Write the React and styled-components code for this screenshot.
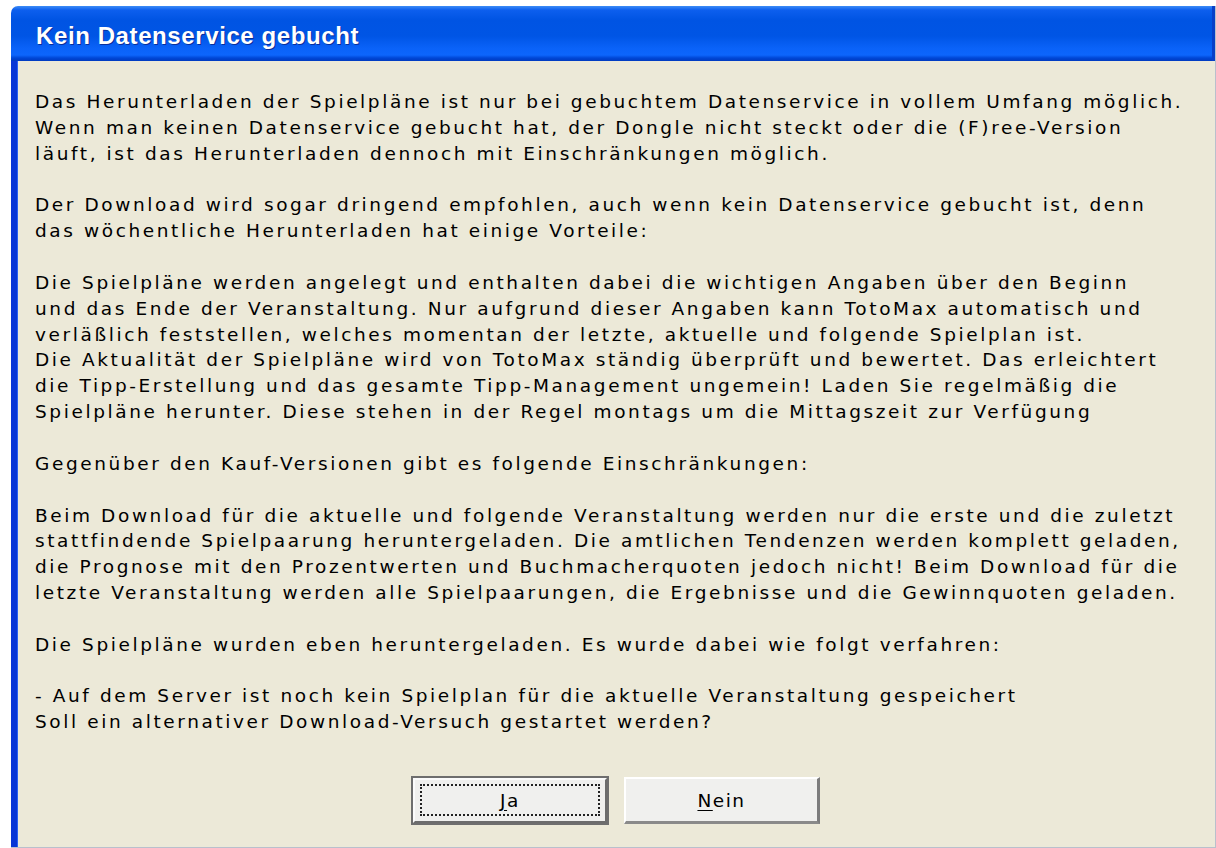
import React from "react";
import styled, { createGlobalStyle } from "styled-components";

const GlobalStyle = createGlobalStyle`
	html, body {
		margin: 0;
		padding: 0;
		background: #fff;
	}
	body {
		font-family: "DejaVu Sans", Verdana, sans-serif;
		overflow: hidden;
	}
`

const Window = styled.div`
	margin: 6px 0 0 11px;
	height: 842px;
	display: flex;
	flex-direction: column;
	box-sizing: border-box;
	border-right: 1px solid #b9c0cc;
	border-bottom: 1px solid #b9c0cc;
`

const TitleBar = styled.div`
	height: 55px;
	flex: none;
	display: flex;
	align-items: center;
	padding-left: 25px;
	border-radius: 7px 0 0 0;
	background: linear-gradient(
		to bottom,
		#3d8cf6 0px,
		#0d5fee 4px,
		#0054e3 14px,
		#0055e5 30px,
		#0a62f8 42px,
		#0d66fc 49px,
		#0047d6 52px,
		#003ac0 55px
	);
	box-shadow: inset -3px 0 0 #0840c8;
`

const Title = styled.span`
	color: #fff;
	font-family: "Liberation Sans", Arial, sans-serif;
	font-weight: bold;
	font-size: 24px;
	letter-spacing: 0.6px;
	margin-top: 4px;
	text-shadow: 1px 1px 0 #0a2f9c;
`

const Body = styled.div`
	flex: 1;
	display: flex;
	flex-direction: column;
	background: #ece9d8;
	border-left: 6px solid #0836d6;
	box-shadow: inset 1px 0 0 #2a62f0;
`

const Message = styled.div`
	padding: 28px 0 0 18px;
	color: #000;
	font-size: 18.5px;
	line-height: 25.85px;
	letter-spacing: 2.6px;
`

const Line = styled.div`
	white-space: pre;
	height: 25.85px;
`

const Buttons = styled.div`
	display: flex;
	justify-content: center;
	gap: 16px;
	margin-top: 42px;
`

const Button = styled.button`
	width: 196px;
	height: 47px;
	box-sizing: border-box;
	position: relative;
	background: #f0f0ee;
	font-family: "DejaVu Sans", Verdana, sans-serif;
	font-size: 18.5px;
	letter-spacing: 1.5px;
	color: #000;
	padding: 0;
	border-style: solid;
	border-width: ${p => (p.$default ? "3px" : "2px 3px 3px 2px")};
	border-color: ${p =>
		p.$default
			? "#fbfbfb #6c6c6c #6c6c6c #fbfbfb"
			: "#ffffff #7c7c7c #8a8a8a #ffffff"};
	outline: ${p => (p.$default ? "2px solid #6e6e6e" : "none")};
	outline-offset: -1px;
	u {
		text-decoration: underline;
		text-underline-offset: 3px;
	}
`

const FocusRect = styled.span`
	position: absolute;
	inset: 4px 5px 5px 5px;
	border: 2px dotted #222;
	pointer-events: none;
`

const lines = [
	"Das Herunterladen der Spielpläne ist nur bei gebuchtem Datenservice in vollem Umfang möglich.",
	"Wenn man keinen Datenservice gebucht hat, der Dongle nicht steckt oder die (F)ree-Version",
	"läuft, ist das Herunterladen dennoch mit Einschränkungen möglich.",
	"",
	"Der Download wird sogar dringend empfohlen, auch wenn kein Datenservice gebucht ist, denn",
	"das wöchentliche Herunterladen hat einige Vorteile:",
	"",
	"Die Spielpläne werden angelegt und enthalten dabei die wichtigen Angaben über den Beginn",
	"und das Ende der Veranstaltung. Nur aufgrund dieser Angaben kann TotoMax automatisch und",
	"verläßlich feststellen, welches momentan der letzte, aktuelle und folgende Spielplan ist.",
	"Die Aktualität der Spielpläne wird von TotoMax ständig überprüft und bewertet. Das erleichtert",
	"die Tipp-Erstellung und das gesamte Tipp-Management ungemein! Laden Sie regelmäßig die",
	"Spielpläne herunter. Diese stehen in der Regel montags um die Mittagszeit zur Verfügung",
	"",
	"Gegenüber den Kauf-Versionen gibt es folgende Einschränkungen:",
	"",
	"Beim Download für die aktuelle und folgende Veranstaltung werden nur die erste und die zuletzt",
	"stattfindende Spielpaarung heruntergeladen. Die amtlichen Tendenzen werden komplett geladen,",
	"die Prognose mit den Prozentwerten und Buchmacherquoten jedoch nicht! Beim Download für die",
	"letzte Veranstaltung werden alle Spielpaarungen, die Ergebnisse und die Gewinnquoten geladen.",
	"",
	"Die Spielpläne wurden eben heruntergeladen. Es wurde dabei wie folgt verfahren:",
	"",
	"- Auf dem Server ist noch kein Spielplan für die aktuelle Veranstaltung gespeichert",
	"Soll ein alternativer Download-Versuch gestartet werden?",
]

const App = () => {
	return (
		<>
			<GlobalStyle />
			<Window>
				<TitleBar>
					<Title>Kein Datenservice gebucht</Title>
				</TitleBar>
				<Body>
					<Message>
						{lines.map((text, i) => <Line key={i}>{text}</Line>)}
					</Message>
					<Buttons>
						<Button $default>
							<FocusRect />
							<u>J</u>a
						</Button>
						<Button>
							<u>N</u>ein
						</Button>
					</Buttons>
				</Body>
			</Window>
		</>
	)
}

export default App
